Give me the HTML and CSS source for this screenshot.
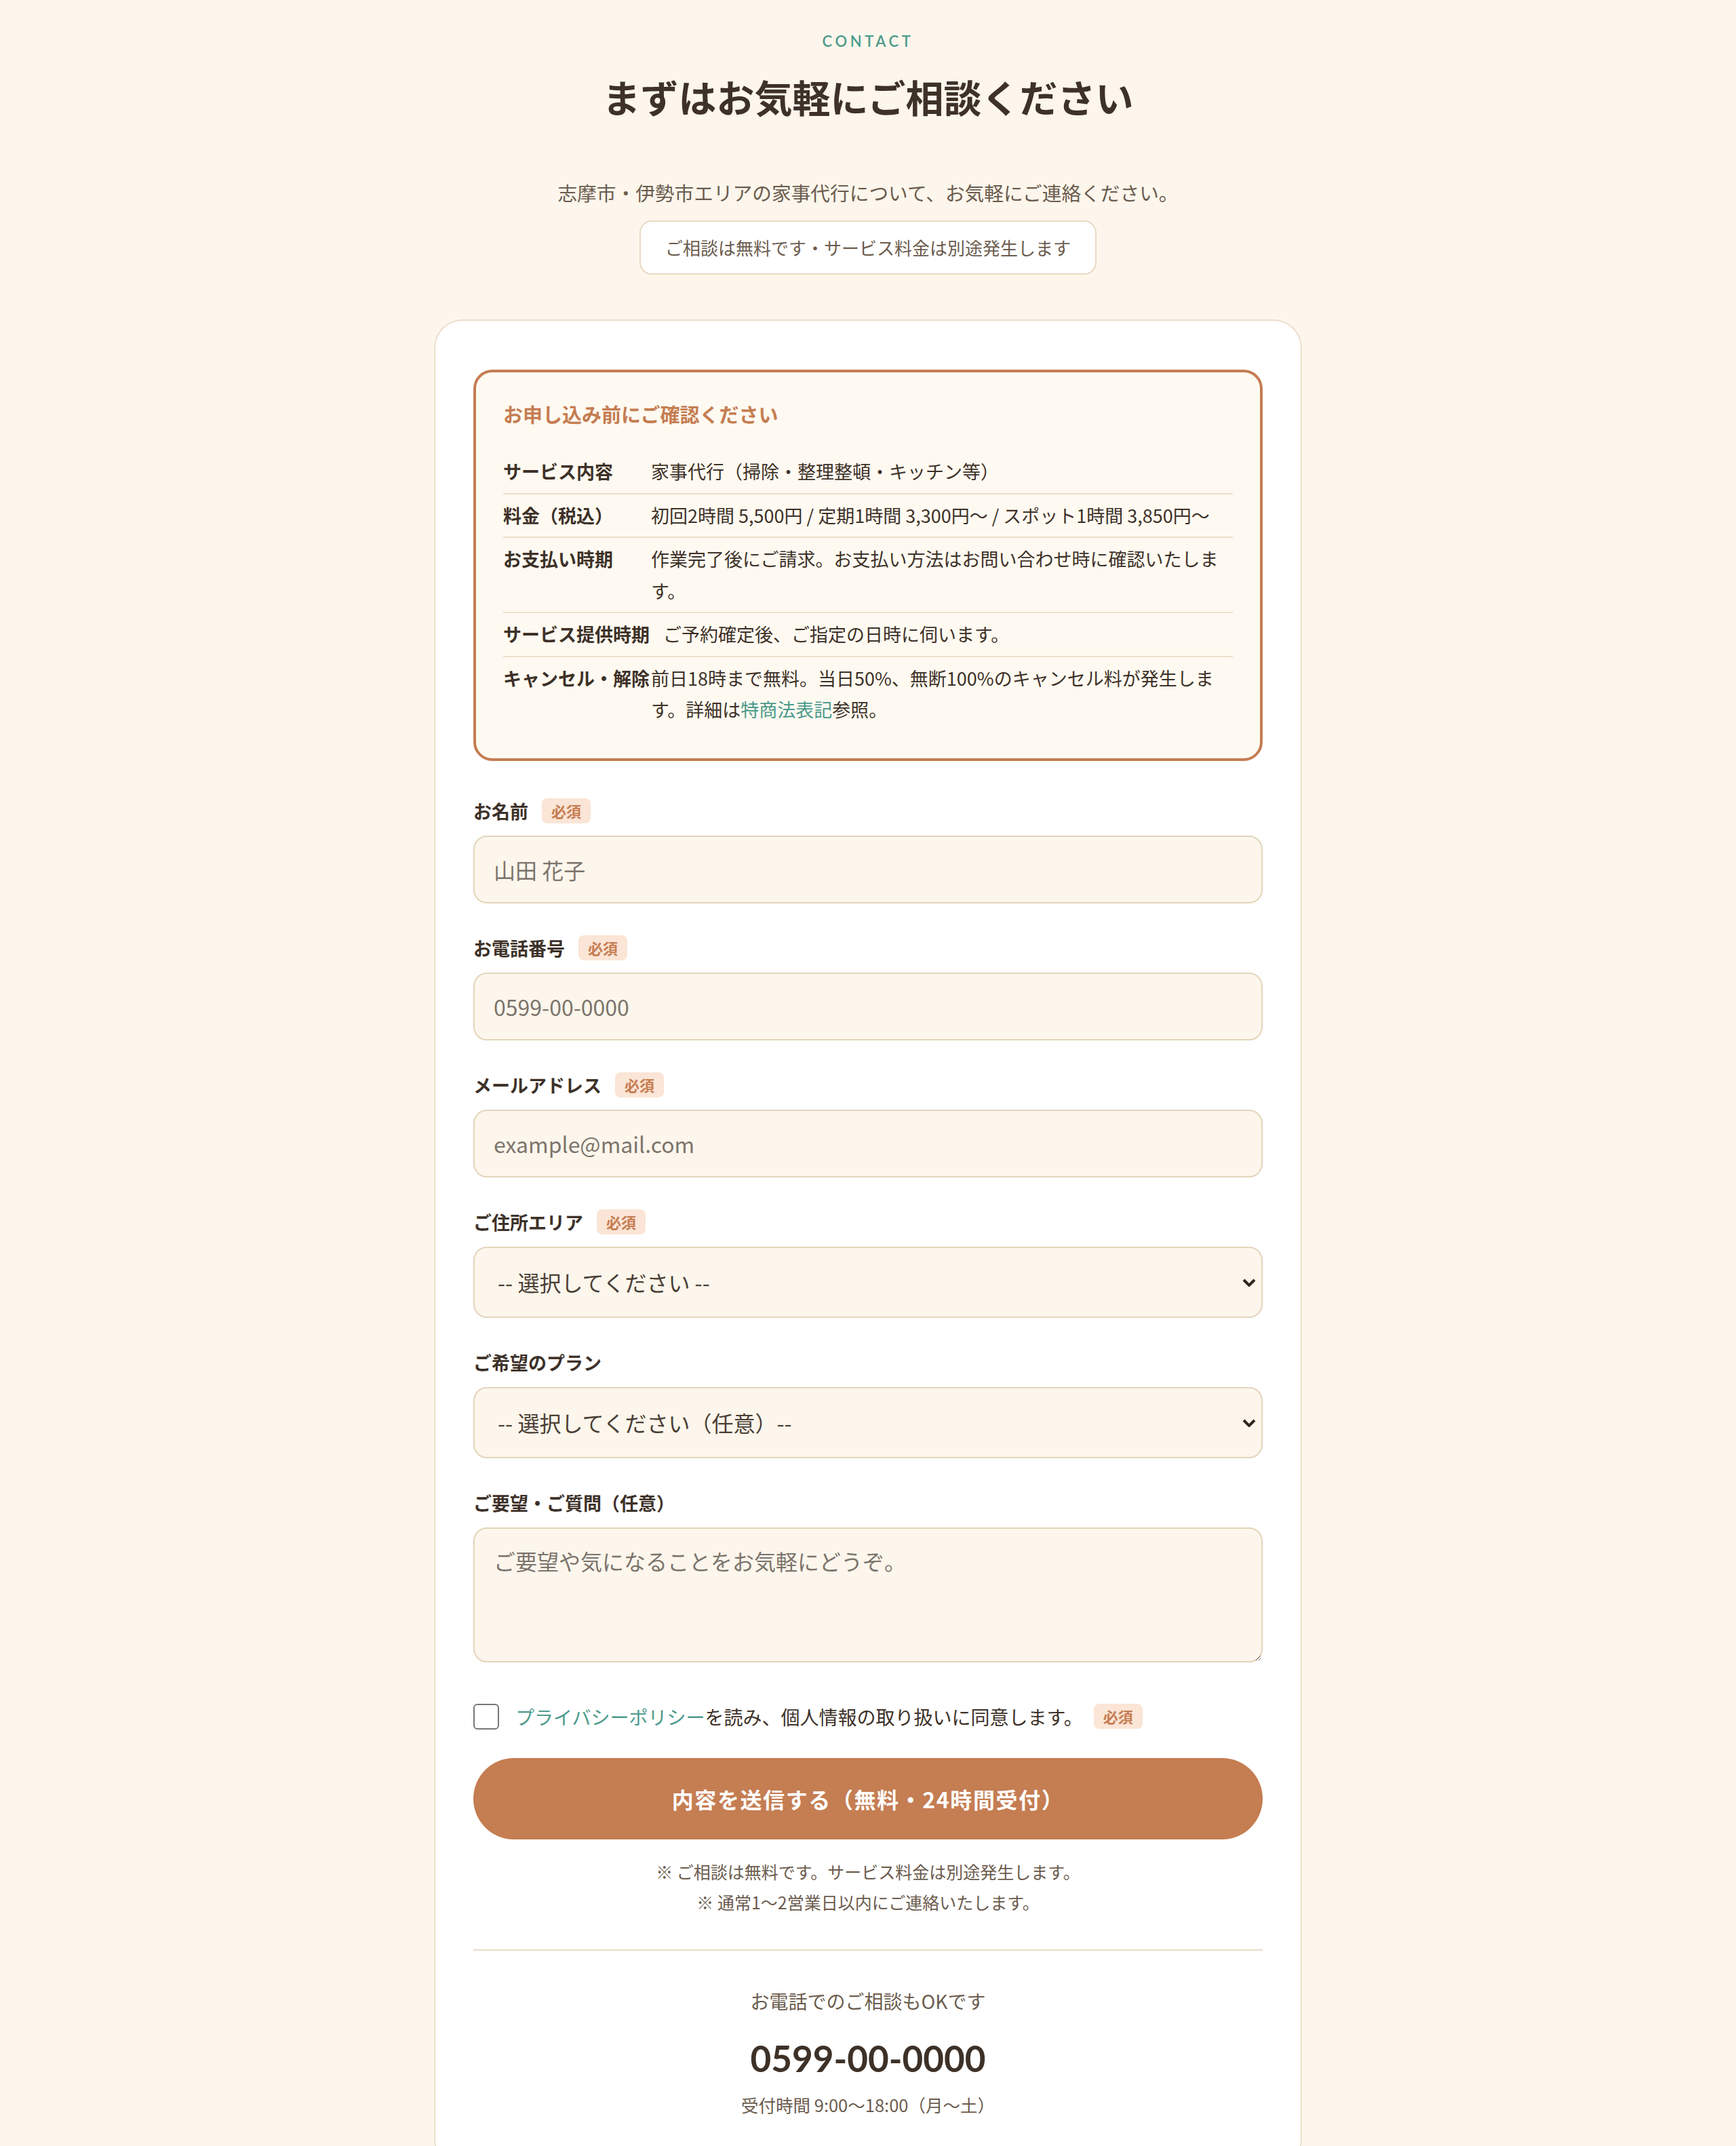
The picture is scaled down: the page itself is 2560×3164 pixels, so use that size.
FILE: index.html
```html
<!DOCTYPE html>
<html lang="ja">
<head>
    <meta charset="UTF-8">
    <meta name="viewport" content="width=device-width, initial-scale=1.0">
    <title>お問い合わせ</title>
    <link rel="stylesheet" href="styles.css">
</head>
<body>

    <section class="contact">
        <p class="eyebrow">CONTACT</p>
        <h2 class="title">まずはお気軽にご相談ください</h2>
        <p class="lead">志摩市・伊勢市エリアの家事代行について、お気軽にご連絡ください。</p>
        <p class="free-note">ご相談は無料です・サービス料金は別途発生します</p>

        <div class="card">
            <div class="notice">
                <h3>お申し込み前にご確認ください</h3>
                <dl>
                    <div class="notice-row"><dt>サービス内容</dt><dd>家事代行（掃除・整理整頓・キッチン等）</dd></div>
                    <div class="notice-row"><dt>料金（税込）</dt><dd>初回2時間 5,500円 / 定期1時間 3,300円〜 / スポット1時間 3,850円〜</dd></div>
                    <div class="notice-row"><dt>お支払い時期</dt><dd>作業完了後にご請求。お支払い方法はお問い合わせ時に確認いたします。</dd></div>
                    <div class="notice-row"><dt>サービス提供時期</dt><dd>ご予約確定後、ご指定の日時に伺います。</dd></div>
                    <div class="notice-row"><dt>キャンセル・解除</dt><dd>前日18時まで無料。当日50%、無断100%のキャンセル料が発生します。詳細は<a href="#">特商法表記</a>参照。</dd></div>
                </dl>
            </div>

            <form class="form">
                <div class="field">
                    <label class="field-label" for="name">お名前<span class="req">必須</span></label>
                    <input class="control" type="text" id="name" placeholder="山田 花子">
                </div>
                <div class="field">
                    <label class="field-label" for="tel">お電話番号<span class="req">必須</span></label>
                    <input class="control" type="tel" id="tel" placeholder="0599-00-0000">
                </div>
                <div class="field">
                    <label class="field-label" for="mail">メールアドレス<span class="req">必須</span></label>
                    <input class="control" type="email" id="mail" placeholder="example@mail.com">
                </div>
                <div class="field">
                    <label class="field-label" for="area">ご住所エリア<span class="req">必須</span></label>
                    <div class="select-wrap">
                        <select class="control select" id="area">
                            <option>-- 選択してください --</option>
                            <option>志摩市</option>
                            <option>伊勢市</option>
                        </select>
                        <svg class="chevron" width="20" height="12" viewBox="0 0 20 12"><path d="M2 2l8 8 8-8" fill="none" stroke="#2f2620" stroke-width="4"/></svg>
                    </div>
                </div>
                <div class="field">
                    <label class="field-label" for="plan">ご希望のプラン</label>
                    <div class="select-wrap">
                        <select class="control select" id="plan">
                            <option>-- 選択してください（任意）--</option>
                            <option>初回お試しプラン</option>
                            <option>定期プラン</option>
                            <option>スポットプラン</option>
                        </select>
                        <svg class="chevron" width="20" height="12" viewBox="0 0 20 12"><path d="M2 2l8 8 8-8" fill="none" stroke="#2f2620" stroke-width="4"/></svg>
                    </div>
                </div>
                <div class="field">
                    <label class="field-label" for="message">ご要望・ご質問（任意）</label>
                    <textarea class="control textarea" id="message" placeholder="ご要望や気になることをお気軽にどうぞ。"></textarea>
                </div>

                <div class="consent">
                    <input type="checkbox" id="agree" class="check">
                    <label for="agree"><a href="#">プライバシーポリシー</a>を読み、個人情報の取り扱いに同意します。</label>
                    <span class="req">必須</span>
                </div>

                <button type="submit" class="submit">内容を送信する（無料・24時間受付）</button>

                <p class="form-notes">※ ご相談は無料です。サービス料金は別途発生します。<br>※ 通常1〜2営業日以内にご連絡いたします。</p>
            </form>

            <div class="tel-box">
                <p class="tel-lead">お電話でのご相談もOKです</p>
                <p class="tel-number">0599-00-0000</p>
                <p class="tel-hours">受付時間 9:00〜18:00（月〜土）</p>
            </div>
        </div>
    </section>

</body>
</html>
```

FILE: styles.css
```css
body {
    margin: 0;
    background-color: #fdf6ec;
    color: #3d3128;
    font-family: "Noto Sans CJK JP", "Noto Sans", sans-serif;
}
p, h2, h3, dl, dd {
    margin: 0;
}
a {
    color: #4b9a8b;
    text-decoration: none;
}

.contact {
    padding: 44px 0 0;
    text-align: center;
}
.eyebrow {
    font-family: Lato, "Noto Sans", sans-serif;
    font-size: 22px;
    line-height: 33px;
    letter-spacing: 4.6px;
    color: #4b9a8b;
    font-weight: 600;
}
.title {
    margin-top: 26px;
    font-size: 56px;
    line-height: 78px;
    font-weight: 700;
    color: #3d3128;
}
.lead {
    margin-top: 78px;
    font-size: 28.7px;
    line-height: 50px;
    color: #6b5c4e;
}
.free-note {
    display: inline-block;
    margin-top: 16px;
    padding: 18px 36px;
    font-size: 26px;
    line-height: 40px;
    color: #6b5c4e;
    background-color: #fff;
    border: 2px solid #e8dbc2;
    border-radius: 18px;
}

.card {
    box-sizing: border-box;
    max-width: 1280px;
    margin: 66px auto 0;
    padding: 72px 56px 72px;
    background-color: #fff;
    border: 2px solid #ebdfca;
    border-radius: 42px;
    text-align: left;
}

/* notice box */
.notice {
    padding: 40px;
    background-color: #fffaf1;
    border: 4px solid #c57d52;
    border-radius: 28px;
}
.notice h3 {
    margin-bottom: 32px;
    font-size: 29px;
    line-height: 43px;
    color: #c57d52;
    font-weight: 700;
}
.notice-row {
    display: flex;
    gap: 20px;
    padding: 8px 0;
    font-size: 27px;
    line-height: 46.5px;
    border-bottom: 2px solid #ebdfc9;
}
.notice-row:last-child {
    border-bottom: none;
}
.notice-row dt {
    min-width: 198px;
    white-space: nowrap;
    font-weight: 700;
}

/* form */
.form {
    margin-top: 54px;
}
.field {
    margin-bottom: 46px;
}
.field-label {
    display: flex;
    align-items: center;
    gap: 20px;
    margin-bottom: 16px;
    font-size: 27px;
    line-height: 40px;
    font-weight: 700;
}
.req {
    display: inline-block;
    padding: 2px 14px;
    font-size: 22px;
    line-height: 33px;
    font-weight: 700;
    color: #c57d52;
    background-color: #fbe5d6;
    border-radius: 8px;
}
.control {
    display: block;
    box-sizing: border-box;
    width: 100%;
    height: 100px;
    padding: 0 28px;
    font-family: "Noto Sans CJK JP", "Noto Sans", sans-serif;
    font-size: 32px;
    color: #3d3128;
    background-color: #fcf6ec;
    border: 2px solid #e3d5bb;
    border-radius: 20px;
    outline: none;
}
.control::placeholder {
    color: #7c746c;
}
.select-wrap {
    position: relative;
}
.select {
    height: 105px;
    padding: 0 64px 0 34px;
    appearance: none;
    -webkit-appearance: none;
    color: #4a3f35;
}
.chevron {
    position: absolute;
    right: 10px;
    top: 47px;
    pointer-events: none;
}
.textarea {
    height: 199px;
    padding: 22px 28px;
    line-height: 1.6;
    resize: vertical;
}

.consent {
    display: flex;
    align-items: center;
    margin-top: 60px;
    font-size: 28px;
    line-height: 40px;
}
.check {
    appearance: none;
    -webkit-appearance: none;
    flex-shrink: 0;
    width: 38px;
    height: 38px;
    margin: 0 24px 0 0;
    background-color: #fff;
    border: 2px solid #767676;
    border-radius: 6px;
}
.consent .req {
    margin-left: 16px;
}

.submit {
    display: block;
    width: 100%;
    height: 120px;
    margin-top: 41px;
    font-family: "Noto Sans CJK JP", "Noto Sans", sans-serif;
    font-size: 32px;
    font-weight: 700;
    letter-spacing: 1.6px;
    color: #fff;
    background-color: #c57d52;
    border: none;
    border-radius: 60px;
}
.form-notes {
    margin-top: 25px;
    font-size: 25px;
    line-height: 45px;
    color: #6b5c4e;
    text-align: center;
}

.tel-box {
    margin-top: 47px;
    padding-top: 52px;
    border-top: 2px solid #e9dcc5;
    text-align: center;
}
.tel-lead {
    font-size: 28px;
    line-height: 44px;
    color: #6b5c4e;
}
.tel-number {
    margin-top: 28px;
    font-family: Lato, "Noto Sans", sans-serif;
    font-size: 53px;
    line-height: 70px;
    font-weight: 700;
    color: #3d3128;
}
.tel-hours {
    margin-top: 14px;
    font-size: 25.5px;
    line-height: 38px;
    color: #6b5c4e;
}
```
